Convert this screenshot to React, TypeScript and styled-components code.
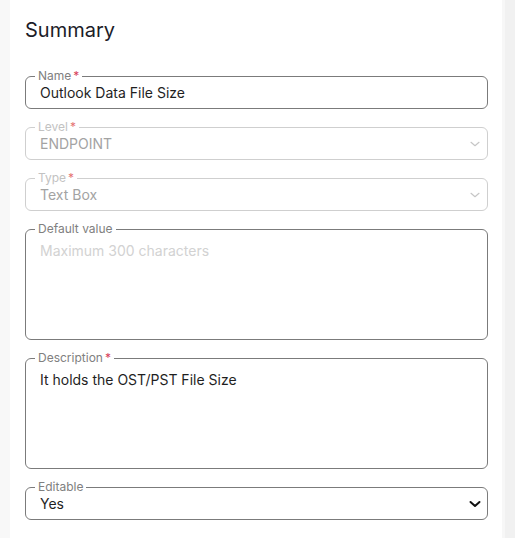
import React from "react";
import styled, { createGlobalStyle, css } from "styled-components";

const Global = createGlobalStyle`
  html, body { margin: 0; padding: 0; }
  body {
    background: #f8f8f8;
    font-family: Inter, "Noto Sans", Arial, sans-serif;
    color: #1f1f1f;
  }
`;

const Page = styled.div`
  display: flex;
  height: 538px;
  padding-left: 10px;
  box-sizing: border-box;
`;

const Panel = styled.section`
  flex: 0 0 492px;
  background: #ffffff;
  padding: 18px 14px 0 15px;
  box-sizing: border-box;
`;

const ScrollTrack = styled.div`
  flex: 1;
  background: linear-gradient(to right, #f7f7f7 0 3px, #f1f1f1 3px);
`;

const Title = styled.h2`
  margin: 0 0 27px 0;
  font-size: 20px;
  line-height: 24px;
  font-weight: 400;
  color: #1c1c28;
`;

const Form = styled.div`
  display: flex;
  flex-direction: column;
  gap: 11px;
`;

const Field = styled.fieldset<{ $disabled?: boolean }>`
  margin: 0;
  padding: 0 6px 0 14px;
  border: 1px solid ${(p) => (p.$disabled ? "#cfcfcf" : "#7b7b7b")};
  border-radius: 6px;
  min-width: 0;
`;

const Legend = styled.legend<{ $disabled?: boolean }>`
  margin-left: -5px;
  padding: 0 3px;
  font-size: 12px;
  line-height: 14px;
  color: ${(p) => (p.$disabled ? "#c2c2c2" : "#808080")};
`;

const Star = styled.span<{ $disabled?: boolean }>`
  margin-left: 2px;
  color: ${(p) => (p.$disabled ? "#e57373" : "#d7405a")};
`;

const Row = styled.div`
  display: flex;
  align-items: center;
  height: 19px;
  padding-bottom: 6px;
`;

const valueText = css`
  font-family: Inter, "Noto Sans", Arial, sans-serif;
  font-size: 14px;
  border: none;
  outline: none;
  background: transparent;
  padding: 0;
  margin: 0;
`;

const Input = styled.input<{ $disabled?: boolean }>`
  ${valueText};
  flex: 1;
  min-width: 0;
  height: 19px;
  line-height: 19px;
  color: ${(p) => (p.$disabled ? "#a3a3a3" : "#1f1f1f")};
`;

const TextArea = styled.textarea`
  ${valueText};
  display: block;
  width: 100%;
  height: 103px;
  box-sizing: border-box;
  padding-top: 5px;
  line-height: 20px;
  resize: none;
  color: #1f1f1f;
  &::placeholder {
    color: #d2d2d2;
  }
`;

const Chevron = ({ bold }: { bold?: boolean }) =>
  bold ? (
    <svg width="12" height="8" viewBox="0 0 12 8" style={{ flex: "none" }}>
      <path d="M1.5 2 L6 6 L10.5 2" fill="none" stroke="#111" strokeWidth="2" strokeLinecap="round" strokeLinejoin="round" />
    </svg>
  ) : (
    <svg width="12" height="8" viewBox="0 0 12 8" style={{ flex: "none" }}>
      <path d="M2 2.3 L6 5.7 L10 2.3" fill="none" stroke="#c6c6c6" strokeWidth="1.2" strokeLinecap="round" strokeLinejoin="round" />
    </svg>
  );

export default function App() {
  return (
    <>
      <Global />
      <Page>
        <Panel>
          <Title>Summary</Title>
          <Form>
            <Field>
              <Legend>
                Name<Star>*</Star>
              </Legend>
              <Row>
                <Input readOnly value="Outlook Data File Size" />
              </Row>
            </Field>
            <Field $disabled>
              <Legend $disabled>
                Level<Star $disabled>*</Star>
              </Legend>
              <Row>
                <Input $disabled readOnly value="ENDPOINT" />
                <Chevron />
              </Row>
            </Field>
            <Field $disabled>
              <Legend $disabled>
                Type<Star $disabled>*</Star>
              </Legend>
              <Row>
                <Input $disabled readOnly value="Text Box" />
                <Chevron />
              </Row>
            </Field>
            <Field>
              <Legend>Default value</Legend>
              <TextArea readOnly placeholder="Maximum 300 characters" />
            </Field>
            <Field>
              <Legend>
                Description<Star>*</Star>
              </Legend>
              <TextArea readOnly value="It holds the OST/PST File Size" />
            </Field>
            <Field>
              <Legend>Editable</Legend>
              <Row>
                <Input readOnly value="Yes" />
                <Chevron bold />
              </Row>
            </Field>
          </Form>
        </Panel>
        <ScrollTrack />
      </Page>
    </>
  );
}
